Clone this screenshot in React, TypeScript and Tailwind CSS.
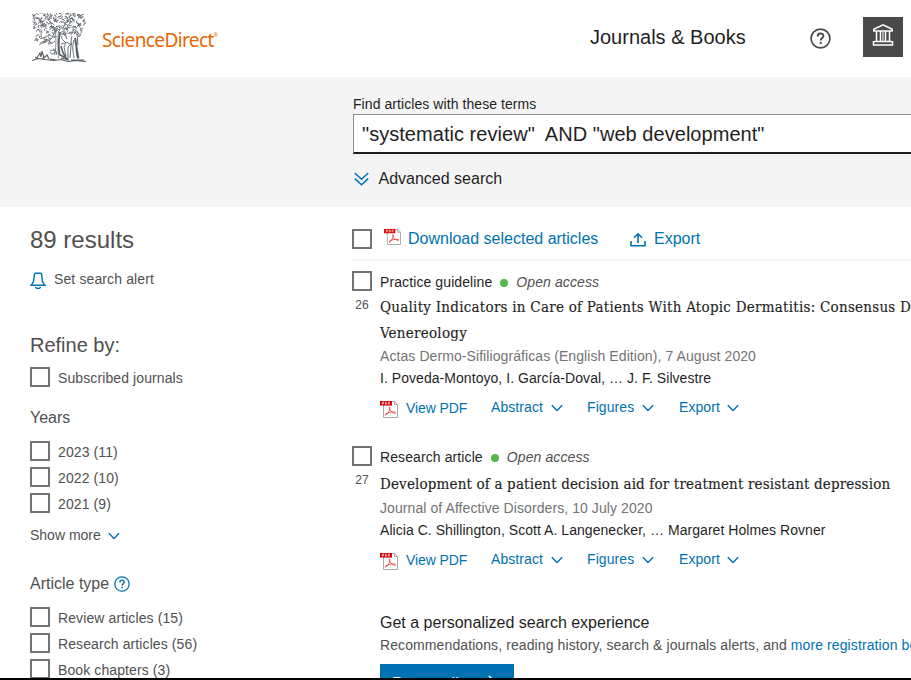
import type { ReactNode } from "react";

const SANS = "font-['Liberation_Sans',Arial,sans-serif]";
const SERIF = "font-['DejaVu_Serif_Condensed','DejaVu_Serif',serif]";

function Checkbox() {
  return <span className="block size-5 shrink-0 border-2 border-[#737373] bg-white" />;
}

function Chevron() {
  return (
    <svg width="12" height="8" viewBox="0 0 12 8" fill="none" stroke="#0072b1" strokeWidth="1.4" className="relative top-px shrink-0">
      <path d="M0.8 1.2 6 6.4l5.2-5.2" />
    </svg>
  );
}

function PdfIcon({ size = 18, className = "" }: { size?: number; className?: string }) {
  return (
    <svg width={size} height={size} viewBox="0 0 18 18" fill="none" className={`shrink-0 ${className}`}>
      <path d="M3.5 1.5h11l3 3v13h-14z" fill="#fff" stroke="#a9a9a9" />
      <path d="M14.5 1.5v3h3" stroke="#a9a9a9" />
      <path d="M0 1h12v4.6H0z" fill="#d60b0b" />
      <path d="M2.5 4.6V2.2h1.2v1.2H2.5M5.5 2.2v2.2h.8c.8 0 .8-2.2 0-2.2zM8.7 4.6V2.2h1.5M8.7 3.4h1.2" stroke="#fff" strokeWidth=".6" />
      <path d="M9.3 6.8c1.3 1.4-.2 5.2-3.6 8.8M9.4 7.3c-.2 2.6 2.2 5.2 6.2 6.1M5.3 14.5c1.8-1.9 5.8-3 10.3-2.3" stroke="#f04a4a" strokeWidth="1" />
    </svg>
  );
}

function HelpIcon({ size, color }: { size: number; color: string }) {
  return (
    <svg width={size} height={size} viewBox="0 0 20 20" fill="none" stroke={color} className="shrink-0">
      <circle cx="10" cy="10" r="9" strokeWidth="1.6" />
      <path d="M7.3 8c0-3.7 5.5-3.7 5.5-.4 0 2-2.6 2-2.6 4.3" strokeWidth="1.8" />
      <path d="M10.2 13.3v1.9" strokeWidth="1.9" />
    </svg>
  );
}

const leaves: string[] = [];
let seed = 11;
const rnd = () => {
  seed = (seed * 16807) % 2147483647;
  return seed / 2147483647;
};
const inCanopy = (x: number, y: number) =>
  y < 13 ||
  (y < 18 && x > 2 && x < 53) ||
  (y < 21 && x > 12 && x < 50) ||
  ((x - 12) / 10) ** 2 + ((y - 25) / 4.5) ** 2 < 1;
for (let y = 1; y < 30; y += 2.7) {
  for (let x = 1; x < 53; x += 2.6) {
    if (!inCanopy(x, y)) continue;
    const px = x + rnd() * 1.6 - 0.3;
    const py = y + rnd() * 2.4 - 0.9;
    const angle = rnd() * 6.28;
    const u = Math.cos(angle) * 2;
    const v = Math.sin(angle) * 2;
    leaves.push(`M${px.toFixed(1)} ${py.toFixed(1)}q${u.toFixed(1)} ${v.toFixed(1)} ${(u - v * 0.6).toFixed(1)} ${(v + u * 0.6).toFixed(1)}t${(-v * 0.7).toFixed(1)} ${(u * 0.7).toFixed(1)}`);
  }
}

function TreeLogo() {
  return (
    <svg width="54" height="49" viewBox="0 0 54 49" fill="none" stroke="#5a5f65" className="shrink-0">
      <path d={leaves.join("")} strokeWidth=".9" />
      <path d="M23.5 18c.5 8 1 16-1 24M26.5 19c-1 8-.5 17 0 26" strokeWidth=".7" />
      <path d="M21 24c-3 3-6 5-11 5M23 28c-2 2-4 3-7 3" strokeWidth=".8" />
      <path d="M28 19.5c-1.5 7-1.5 15-.5 22l9 5" strokeWidth="1.8" />
      <path d="M28 20c2-2 5-1 5.500 1l1 5M30 23c-1 2 0 3 1 4l3 3-2 4 2 9M29 31l4-1" strokeWidth=".9" />
      <path d="M29 33c1 5 2 8 5 11" strokeWidth="1.5" />
      <path d="M39 22c0-4 5-4 6 0 1 4 0 6 1 10M40 23c-1 4-1 6-1 10l-1 12M42 27c-2 6-1 12 0 18M34 29l6 3M36 34l4-4M36 34v11" strokeWidth=".9" />
      <path d="M43 25c1.5 7 2 14 3.5 20.5M44.5 33c0 5 .5 9 1.5 12" strokeWidth="2" />
      <path d="M18 38c3-2 6 0 7 3M18 39c1 3 4 2 5 0M21 36c3 0 4 4 3 6" strokeWidth=".9" />
      <path d="M0 47.500l6-2 7 1 9 1 7-1 7 2 8-1 10 1M5 45l3-5 1 4 1-6 2 7 3-3 2 4M29 45l8 2M39 47h13M3 44l3 2M14 43l-4 3M18 46l6 1" strokeWidth="1.1" />
    </svg>
  );
}

function Institution() {
  return (
    <span className="flex size-10 items-start justify-center bg-[#4a4a4a] pt-[6px]">
      <svg width="22" height="24" viewBox="0 0 22 24" fill="none" stroke="#fff" strokeWidth="1.5">
        <path d="M1.8 8V6.200L11 1.800l9.200 4.400V8zM4.500 8v10.500M8.500 8v10M13.500 8v10M17.500 8v10.500" />
        <path d="M11 9v9" strokeWidth="1" />
        <path d="M2.500 18.500h17M1.500 22v-3.200h1M20.500 22v-3.200h-1M.8 22h20.400" />
      </svg>
    </span>
  );
}

function Filter({ children }: { children: ReactNode }) {
  return (
    <label className="mb-[6px] flex h-5 gap-2">
      <Checkbox />
      <span className="mt-px text-sm leading-5 tracking-[0.1px]">{children}</span>
    </label>
  );
}

type Article = {
  n: number;
  type: string;
  title: ReactNode;
  titleSpacing: string;
  journal: string;
  authors: string;
};

function Result({ a }: { a: Article }) {
  return (
    <article className="flex gap-2">
      <div className="flex w-5 shrink-0 flex-col items-center">
        <Checkbox />
        <span className="mt-1 text-xs leading-5 text-[#505050]">{a.n}</span>
      </div>
      <div className="min-w-0">
        <div className="mt-px flex h-5 items-center text-sm leading-5 tracking-[0.1px] text-[#1f1f1f]">
          {a.type}
          <span className="mt-[2px] ml-2 size-2 rounded-full bg-[#53b848]" />
          <span className="ml-2 text-[#505050] italic">Open access</span>
        </div>
        <h3 className={`${SERIF} ${a.titleSpacing} text-[15px] leading-[26px] whitespace-nowrap text-[#1f1f1f] [-webkit-text-stroke:0.15px]`}>{a.title}</h3>
        <p className="text-sm leading-[22px] tracking-[0.08px] whitespace-nowrap text-[#737373]">{a.journal}</p>
        <p className="text-sm leading-[22px] tracking-[0.05px] whitespace-nowrap text-[#1f1f1f]">{a.authors}</p>
        <div className="mt-2 flex h-5 text-sm leading-5 tracking-[0.08px] text-[#0072b1]">
          <PdfIcon className="mt-[3px]" />
          <span className="mt-px ml-2 w-[85px] tracking-[-0.1px]">View PDF</span>
          <span className="flex w-24 items-center gap-2">Abstract <Chevron /></span>
          <span className="flex w-[92px] items-center gap-2">Figures <Chevron /></span>
          <span className="flex items-center gap-[7px]">Export <Chevron /></span>
        </div>
      </div>
    </article>
  );
}

export default function App() {
  return (
    <div className={`${SANS} flex h-[680px] w-[911px] flex-col overflow-hidden border-b-2 border-black bg-white text-[#505050]`}>
      <header className="flex h-[77px] shrink-0 items-start pl-8">
        <div className="mt-[13px]"><TreeLogo /></div>
        <div className="mt-[27px] ml-4 flex w-[488px] font-['Noto_Sans',sans-serif] text-[19px] leading-[26px] tracking-[-0.62px] text-[#eb6500]">
          ScienceDirect<span className="text-[5px] leading-[16px]">®</span>
        </div>
        <span className="mt-[25px] w-[220px] text-xl leading-6 text-[#1f1f1f]">Journals &amp; Books</span>
        <span className="mt-7 w-[53px]"><HelpIcon size={21} color="#4a4a4a" /></span>
        <div className="mt-[17px]"><Institution /></div>
      </header>

      <section className="h-[130px] shrink-0 bg-[#f4f4f4] pt-[17px] pl-[353px] text-[#1f1f1f]">
        <div className="text-sm leading-5 tracking-[0.07px]">Find articles with these terms</div>
        <div className="h-10 w-[620px] border border-b-2 border-[#8e8e8e] border-b-[#1f1f1f] bg-white pt-[7px] pl-2 text-xl leading-6 tracking-[0.04px] whitespace-pre">
          "systematic review"  AND "web development"
        </div>
        <div className="mt-[15px] flex gap-[9.5px] text-base leading-5">
          <svg width="16" height="16" viewBox="0 0 16 16" fill="none" stroke="#0072b1" strokeWidth="1.5" className="mt-[2px]">
            <path d="M1.8 2 8.5 8.2 15.2 2M1.8 7.6l6.7 6.2 6.7-6.2" />
          </svg>
          Advanced search
        </div>
      </section>

      <main className="flex min-h-0 flex-1">
        <aside className="w-[352px] shrink-0 pl-[30px]">
          <h1 className="mt-[19px] text-2xl leading-7">89 results</h1>
          <div className="mt-[15px] flex h-5 gap-2 text-sm leading-5 tracking-[0.12px]">
            <svg width="16" height="18" viewBox="0 0 16 18" fill="none" stroke="#0072b1" strokeWidth="1.4" className="mt-[3px]">
              <path d="M1 13.3c1.2-1.3 2.2-2.3 2.6-4.3.5-2.5.3-5 .9-7 .1-.5.5-.8 1-.8h5c.5 0 .9.3 1 .8.6 2 .4 4.5.9 7 .4 2 1.4 3 2.600 4.300zM5.400 15c.8 2 4.400 2 5.200 0" />
            </svg>
            Set search alert
          </div>
          <h2 className="mt-11 text-xl leading-6">Refine by:</h2>
          <div className="mt-[10px]"><Filter>Subscribed journals</Filter></div>
          <h3 className="mt-[21px] text-base leading-5">Years</h3>
          <div className="mt-[13px]">
            <Filter>2023 (11)</Filter>
            <Filter>2022 (10)</Filter>
            <Filter>2021 (9)</Filter>
          </div>
          <div className="mt-3 flex h-5 items-center gap-[7px] text-sm leading-5">Show more <Chevron /></div>
          <div className="mt-[29px] mb-[13px] flex h-5 items-center gap-[5px] text-base leading-5">
            Article type <HelpIcon size={16} color="#0072b1" />
          </div>
          <Filter>Review articles (15)</Filter>
          <Filter>Research articles (56)</Filter>
          <Filter>Book chapters (3)</Filter>
        </aside>

        <section className="w-[559px] shrink-0 overflow-hidden">
          <div className="flex h-[54px] border-b-2 border-[#f4f4f4] pt-[22px] text-base leading-5 text-[#0072b1]">
            <Checkbox />
            <PdfIcon size={17} className="-mt-[1px] ml-3" />
            <span className="ml-[7px] w-[222px]">Download selected articles</span>
            <svg width="16" height="16" viewBox="0 0 16 16" fill="none" stroke="#0072b1" strokeWidth="1.6" className="mt-[3px] mr-2">
              <path d="M1 9v4.7h14V9M8 11V2M4 5.8l4-4 4 4" />
            </svg>
            Export
          </div>
          <div className="mt-[10px] h-[175px]">
            <Result
              a={{
                n: 26,
                type: "Practice guideline",
                title: <>Quality Indicators in Care of Patients With Atopic Dermatitis: Consensus D<br />Venereology</>,
                titleSpacing: "mt-[2px] mb-[-1px] tracking-[0.25px]",
                journal: "Actas Dermo-Sifiliográficas (English Edition), 7 August 2020",
                authors: "I. Poveda-Montoyo, I. García-Doval, … J. F. Silvestre",
              }}
            />
          </div>
          <div className="h-[167px]">
            <Result
              a={{
                n: 27,
                type: "Research article",
                title: "Development of a patient decision aid for treatment resistant depression",
                titleSpacing: "mt-1 tracking-[0.16px]",
                journal: "Journal of Affective Disorders, 10 July 2020",
                authors: "Alicia C. Shillington, Scott A. Langenecker, … Margaret Holmes Rovner",
              }}
            />
          </div>
          <div className="pl-7 whitespace-nowrap">
            <h3 className="text-base leading-5 text-[#1f1f1f]">Get a personalized search experience</h3>
            <p className="mt-[2px] text-sm leading-5 tracking-[0.1px]">
              Recommendations, reading history, search &amp; journals alerts, and <span className="text-[#0072b1]">more registration be</span>
            </p>
            <div className="mt-[9px] flex h-10 w-[134px] items-start gap-3 bg-[#0072b1] pt-[10px] pl-3 text-base leading-5 text-white">
              Personalize
              <svg width="10" height="16" viewBox="0 0 10 16" fill="none" stroke="#fff" strokeWidth="1.6" className="mt-px"><path d="M1 1l7 7-7 7" /></svg>
            </div>
          </div>
        </section>
      </main>
    </div>
  );
}
